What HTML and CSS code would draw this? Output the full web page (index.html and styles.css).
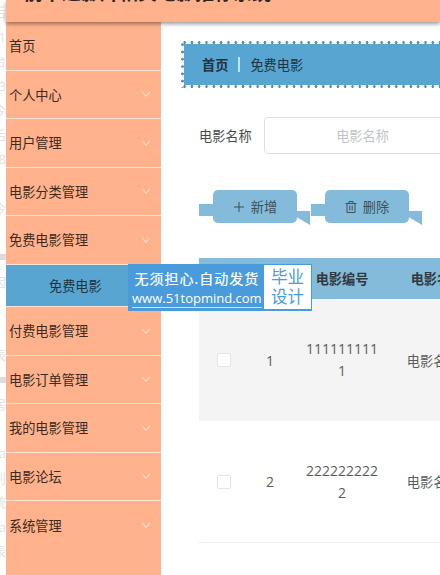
FILE: index.html
```html
<!DOCTYPE html>
<html lang="zh">
<head>
    <meta charset="UTF-8">
    <meta name="viewport" content="width=device-width, initial-scale=1.0">
    <title>免费电影</title>
    <link rel="stylesheet" href="styles.css">
</head>
<body>

<div class="page">
    <!-- right edge of a scrolled-off column, only slivers of it are visible -->
    <div class="edge">
        <span>后</span><span>01</span><span>台</span><span>3</span><span>今</span><span>后</span><span>8</span><span></span><span>今</span><span></span><i class="edge-mark"></i><span>因</span><span></span><span></span><span>表</span><i class="edge-mark"></i><span>房</span><span></span><span>a</span><span>刊</span><span>统</span><span>a</span><span>表</span>
    </div>

    <div class="main">
        <header class="topbar">
            <h1>前卡通影片相关电影推荐系统</h1>
        </header>

        <div class="body">
            <nav class="sidebar">
                <div class="menu-item">首页</div>
                <div class="menu-item">个人中心<svg class="chev" viewBox="0 0 12 7"><path d="M1 1l5 5 5-5"/></svg></div>
                <div class="menu-item">用户管理<svg class="chev" viewBox="0 0 12 7"><path d="M1 1l5 5 5-5"/></svg></div>
                <div class="menu-item">电影分类管理<svg class="chev" viewBox="0 0 12 7"><path d="M1 1l5 5 5-5"/></svg></div>
                <div class="menu-item">免费电影管理<svg class="chev" viewBox="0 0 12 7"><path d="M1 1l5 5 5-5"/></svg></div>
                <div class="submenu-item">免费电影</div>
                <div class="menu-item">付费电影管理<svg class="chev" viewBox="0 0 12 7"><path d="M1 1l5 5 5-5"/></svg></div>
                <div class="menu-item">电影订单管理<svg class="chev" viewBox="0 0 12 7"><path d="M1 1l5 5 5-5"/></svg></div>
                <div class="menu-item">我的电影管理<svg class="chev" viewBox="0 0 12 7"><path d="M1 1l5 5 5-5"/></svg></div>
                <div class="menu-item">电影论坛<svg class="chev" viewBox="0 0 12 7"><path d="M1 1l5 5 5-5"/></svg></div>
                <div class="menu-item last">系统管理<svg class="chev" viewBox="0 0 12 7"><path d="M1 1l5 5 5-5"/></svg></div>
            </nav>

            <div class="content">
                <div class="crumb">
                    <b>首页</b><i class="crumb-sep"></i><span>免费电影</span>
                </div>

                <div class="search">
                    <label>电影名称</label>
                    <div class="search-input">电影名称</div>
                </div>

                <div class="actions">
                    <button class="ribbon-btn">
                        <svg class="btn-icon" viewBox="0 0 12 12"><path d="M6 1v10M1 6h10"/></svg>新增
                    </button>
                    <button class="ribbon-btn">
                        <svg class="btn-icon" viewBox="0 0 12 12"><path d="M.5 2.500h11M4 2.500V.5h4v2M2 2.500v9h8v-9M4.800 4.500v5M7.200 4.500v5"/></svg>删除
                    </button>
                </div>

                <div class="table">
                    <div class="row head">
                        <div class="c-check"></div>
                        <div class="c-index"></div>
                        <div class="c-code">电影编号</div>
                        <div class="c-name">电影名称</div>
                    </div>
                    <div class="row odd">
                        <div class="c-check"><span class="box"></span></div>
                        <div class="c-index">1</div>
                        <div class="c-code">1111111111</div>
                        <div class="c-name">电影名称1</div>
                    </div>
                    <div class="row">
                        <div class="c-check"><span class="box"></span></div>
                        <div class="c-index">2</div>
                        <div class="c-code">2222222222</div>
                        <div class="c-name">电影名称2</div>
                    </div>
                </div>
            </div>
        </div>
    </div>
</div>

<!-- ad badge sitting over the page -->
<div class="promo">
    <div class="promo-text">
        <div class="promo-line">无须担心.自动发货</div>
        <div class="promo-url">www.51topmind.com</div>
    </div>
    <div class="promo-tag">毕业<br>设计</div>
</div>

</body>
</html>
```

FILE: styles.css
```css
html, body {
    margin: 0;
    padding: 0;
    height: 100%;
    overflow: hidden;
    background: #fff;
}
body {
    font-family: "Open Sans", "Noto Sans CJK SC", sans-serif;
    font-size: 13.2px;
    color: #5c5c5c;
}
.page {
    display: flex;
    width: 440px;
    height: 575px;
    overflow: hidden;
}
.edge {
    width: 6px;
    flex: none;
    display: grid;
    grid-template-columns: 6px;
    grid-auto-rows: 24.5px;
    justify-items: end;
    align-items: center;
    overflow: hidden;
    color: #e2e2e2;
    font-size: 13px;
    line-height: 24px;
    white-space: nowrap;
}
.edge-mark {
    width: 6px;
    height: 6px;
    background: #dcdcdc;
}
.main {
    flex: 1;
    min-width: 0;
    display: flex;
    flex-direction: column;
}
.topbar {
    height: 22px;
    flex: none;
    background: #ffb28c;
    box-shadow: 0 2px 4px rgba(0, 0, 0, 0.4);
    overflow: hidden;
    position: relative;
    z-index: 2;
}
.topbar h1 {
    margin: -20px 0 0 18px;
    font-size: 19px;
    line-height: 26px;
    font-weight: 700;
    color: #33241c;
    white-space: nowrap;
}
.body {
    flex: 1;
    display: flex;
    min-height: 0;
}
.sidebar {
    width: 155px;
    flex: none;
    background: #ffb28c;
}
.menu-item {
    height: 48.5px;
    box-sizing: border-box;
    border-bottom: 1px solid #ffe3d3;
    display: flex;
    align-items: center;
    justify-content: space-between;
    padding: 0 10px 0 3px;
    color: #3d2a20;
}
.menu-item.last {
    border-bottom: none;
}
.chev {
    width: 10px;
    height: 6px;
    fill: none;
    stroke: #ffdcc8;
    stroke-width: 1.500;
}
.submenu-item {
    height: 42.5px;
    box-sizing: border-box;
    background: #57a5d0;
    border-bottom: 1px solid #ffe3d3;
    display: flex;
    align-items: center;
    padding-left: 43px;
    color: #1f3340;
}
.content {
    flex: 1;
    min-width: 0;
    padding: 19px 0 0 20px;
    overflow: hidden;
}
.crumb {
    width: 300px;
    height: 41px;
    border: 3px solid transparent;
    background:
        radial-gradient(circle, #5b8aa5 1.1px, transparent 1.6px) 0 0 / 7.300px 3px repeat-x border-box,
        radial-gradient(circle, #5b8aa5 1.1px, transparent 1.6px) 0 100% / 7.300px 3px repeat-x border-box,
        radial-gradient(circle, #5b8aa5 1.1px, transparent 1.6px) 0 0 / 3px 7.300px repeat-y border-box,
        linear-gradient(#57a5d0, #57a5d0) padding-box;
    display: flex;
    align-items: center;
    padding-left: 18px;
    color: #1f3340;
}
.crumb-sep {
    width: 2px;
    height: 15px;
    margin: 0 10px;
    background: #bfe6f7;
}
.search {
    display: flex;
    align-items: center;
    margin: 29px 0 0 18px;
    height: 37px;
    width: 300px;
    white-space: nowrap;
}
.search label {
    width: 65px;
    flex: none;
    color: #4a4a4a;
}
.search-input {
    width: 195px;
    height: 35px;
    flex: none;
    border: 1px solid #dcdfe6;
    border-radius: 4px;
    display: flex;
    align-items: center;
    justify-content: center;
    color: #c0c4cc;
}
.actions {
    display: flex;
    gap: 28px;
    margin: 36px 0 0 32px;
}
.ribbon-btn {
    position: relative;
    width: 84px;
    height: 33px;
    border: none;
    border-radius: 5px;
    background: #84bbdb;
    color: #3f4f59;
    font: inherit;
    display: flex;
    align-items: center;
    justify-content: center;
}
.ribbon-btn::before {
    content: "";
    position: absolute;
    left: -14px;
    top: 14px;
    width: 14px;
    height: 12px;
    background: #84bbdb;
}
.ribbon-btn::after {
    content: "";
    position: absolute;
    right: -13px;
    top: 21px;
    width: 13px;
    height: 14px;
    background: #84bbdb;
    clip-path: polygon(0 0, 100% 0, 100% 100%, 0 45%);
}
.btn-icon {
    width: 12px;
    height: 12px;
    margin-right: 6px;
    fill: none;
    stroke: #3f4f59;
    stroke-width: 1;
}
.table {
    width: 300px;
    margin: 35px 0 0 18px;
}
.row {
    display: grid;
    grid-template-columns: 48px 46px 98px 92px;
    height: 122px;
    align-items: center;
    border-bottom: 1px solid #ebeef5;
    box-sizing: border-box;
    text-align: center;
    color: #5c5c5c;
    font-size: 14px;
}
.row.head {
    height: 41px;
    background: #84bbdb;
    border-bottom: none;
    color: #2f3a40;
    font-size: 13.2px;
    font-weight: 700;
}
.row.odd {
    background: #f4f4f4;
    border-bottom: none;
}
.c-code {
    width: 74px;
    justify-self: center;
    word-break: break-all;
    line-height: 22px;
}
.row.head .c-code {
    width: auto;
}
.c-name {
    font-size: 13.2px;
    white-space: nowrap;
}
.box {
    display: block;
    width: 12px;
    height: 12px;
    margin-left: 18px;
    background: #fff;
    border: 1px solid #e2e4e8;
    border-radius: 2px;
}
.promo {
    position: absolute;
    left: 128px;
    top: 264px;
    width: 184px;
    height: 47px;
    box-sizing: border-box;
    background: #4a9bdc;
    display: flex;
    justify-content: space-between;
    padding: 1px 1px 2px 4px;
    color: #fff;
}
.promo-text {
    text-align: center;
}
.promo-line {
    margin-top: 3px;
    font-size: 14px;
    line-height: 22px;
    letter-spacing: 1px;
    -webkit-text-stroke: 0.2px #fff;
}
.promo-url {
    font-size: 13px;
    line-height: 17px;
    border-bottom: 1px solid #cfe4f6;
    white-space: nowrap;
}
.promo-tag {
    width: 47px;
    padding-top: 2px;
    background: #fff;
    color: #4a9bdc;
    font-size: 16.500px;
    line-height: 20px;
    text-align: center;
}
```
